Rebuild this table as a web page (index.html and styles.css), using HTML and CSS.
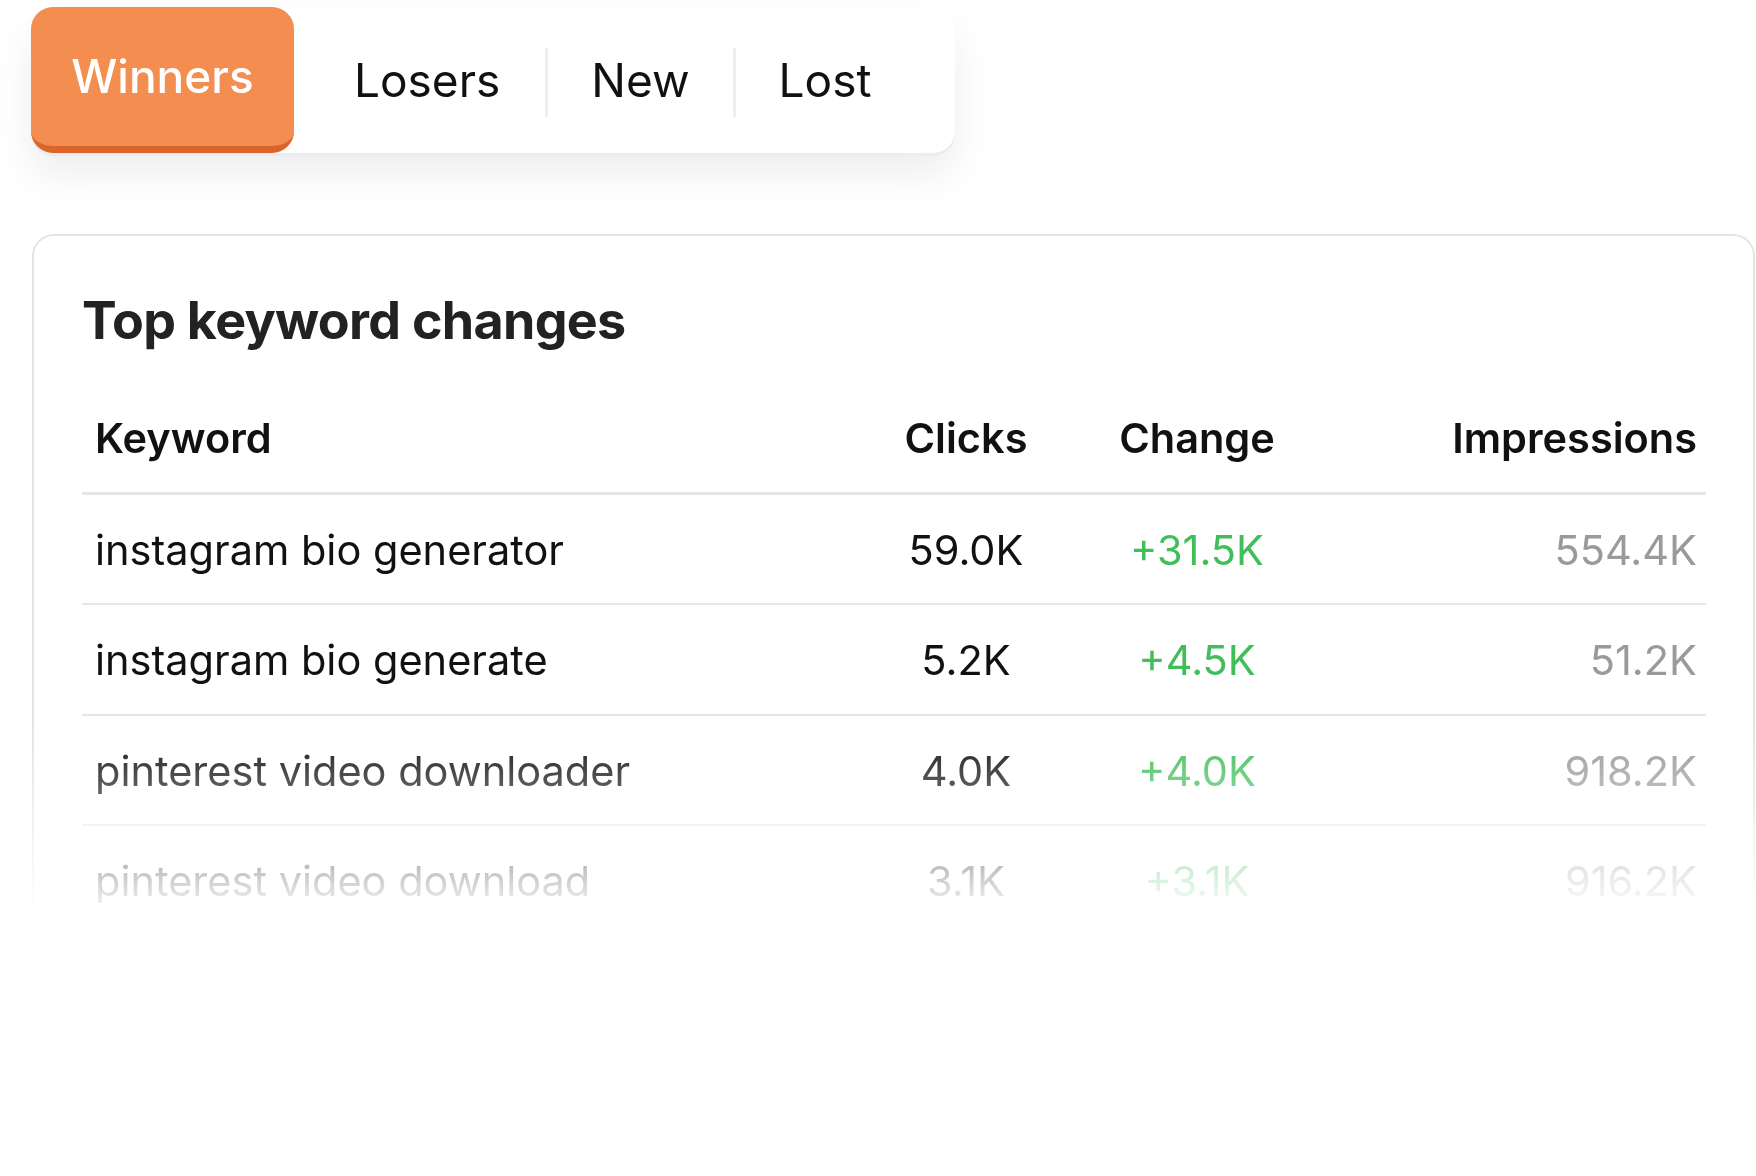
FILE: index.html
```html
<!DOCTYPE html>
<html lang="en">
<head>
<meta charset="utf-8">
<title>Top keyword changes</title>
<link rel="stylesheet" href="styles.css">
</head>
<body>
<div class="page">
  <nav class="tabs">
    <button class="tab tab-active">Winners</button>
    <button class="tab tab-first">Losers</button>
    <span class="sep"></span>
    <button class="tab">New</button>
    <span class="sep"></span>
    <button class="tab tab-last">Lost</button>
  </nav>

  <section class="card">
    <h2 class="title">Top keyword changes</h2>
    <div class="table">
      <div class="row head">
        <div class="c kw">Keyword</div>
        <div class="c mid">Clicks</div>
        <div class="c mid">Change</div>
        <div class="c end">Impressions</div>
      </div>
      <div class="row">
        <div class="c kw">instagram bio generator</div>
        <div class="c mid">59.0K</div>
        <div class="c mid up">+31.5K</div>
        <div class="c end muted">554.4K</div>
      </div>
      <div class="row">
        <div class="c kw">instagram bio generate</div>
        <div class="c mid">5.2K</div>
        <div class="c mid up">+4.5K</div>
        <div class="c end muted">51.2K</div>
      </div>
      <div class="row">
        <div class="c kw">pinterest video downloader</div>
        <div class="c mid">4.0K</div>
        <div class="c mid up">+4.0K</div>
        <div class="c end muted">918.2K</div>
      </div>
      <div class="row">
        <div class="c kw">pinterest video download</div>
        <div class="c mid">3.1K</div>
        <div class="c mid up">+3.1K</div>
        <div class="c end muted">916.2K</div>
      </div>
    </div>
  </section>
</div>
</body>
</html>
```

FILE: styles.css
```css
* { box-sizing: border-box; }

html, body {
  margin: 0;
  padding: 0;
  background: #ffffff;
}

body {
  font-family: Inter, "Liberation Sans", Arial, sans-serif;
  color: #111111;
}

.page {
  height: 903px;
  overflow: hidden;
  padding: 7px 1px 0 31px;
  -webkit-mask-image: linear-gradient(to bottom, #000 0, #000 727px, transparent 918px);
  mask-image: linear-gradient(to bottom, #000 0, #000 727px, transparent 918px);
}

/* ---------- tabs ---------- */
.tabs {
  display: inline-flex;
  align-items: center;
  width: 924px;
  height: 146px;
  background: #ffffff;
  border-radius: 22px;
  box-shadow: 0 3px 0 #ececec, 0 22px 40px rgba(0, 0, 0, 0.07);
}

.tab {
  font-family: Inter, "Liberation Sans", Arial, sans-serif;
  font-size: 46px;
  font-weight: 400;
  color: #111111;
  background: none;
  border: 0;
  padding: 0 43px;
  line-height: 1;
  cursor: pointer;
}

.tab-first { margin-left: 17px; padding-right: 45px; }

.tab-active {
  align-self: stretch;
  width: 263px;
  padding: 0 0 1px;
  background: #f48e50;
  color: #ffffff;
  font-weight: 500;
  border-radius: 22px;
  border-bottom: 7px solid #d9652a;
}

.sep {
  width: 3px;
  height: 69px;
  margin-top: 4px;
  background: #efefef;
}

/* ---------- card ---------- */
.card {
  margin-top: 81px;
  margin-left: 1px;
  border: 2px solid #e4e4e4;
  border-radius: 22px;
  padding: 59px 47px 0 48px;
  height: 900px;
}

.title {
  margin: 0;
  font-size: 52px;
  line-height: 1;
  font-weight: 700;
  letter-spacing: -0.7px;
  color: #222222;
}

.table {
  margin-top: 71px;
}

.row {
  display: grid;
  grid-template-columns: 1fr 230px 232px 393px;
  padding: 35px 0 32px;
  border-bottom: 2px solid #e6e6e6;
  font-size: 41.5px;
  line-height: 1;
}

.row.head {
  font-weight: 600;
  color: #111111;
  padding-top: 0;
  padding-bottom: 32px;
  border-bottom-width: 3px;
}

.c { padding: 0 13px; white-space: nowrap; }
.kw { text-align: left; }
.mid { text-align: center; padding: 0; }
.end { text-align: right; padding-right: 9px; }

.up { color: #40be5a; }
.muted { color: #9a9a9a; }
```
